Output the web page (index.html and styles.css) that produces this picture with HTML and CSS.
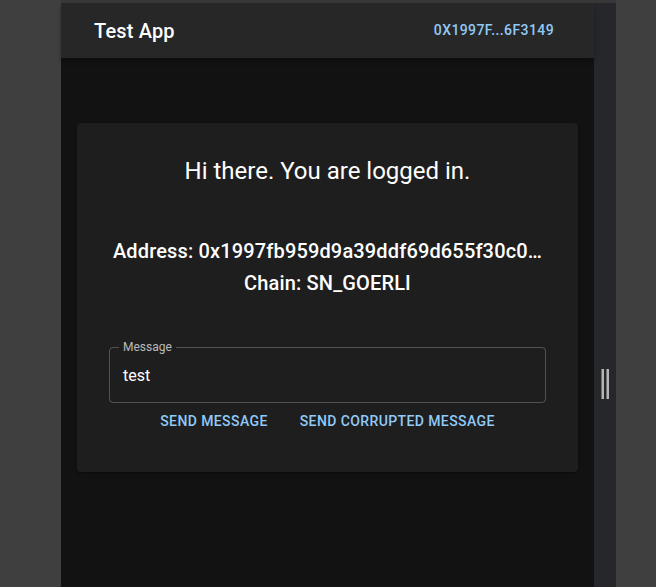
FILE: index.html
```html
<!DOCTYPE html>
<html>
<head>
<meta charset="utf-8">
<link rel="stylesheet" href="styles.css">
</head>
<body>
<div class="screen">
  <div class="gutter"></div>
  <div class="frame">
    <div class="topband"></div>
    <div class="window">
      <div class="app">
        <header class="appbar">
          <div class="title">Test App</div>
          <button class="account">0X1997F...6F3149</button>
        </header>
        <main class="main">
          <section class="card">
            <h1 class="greeting">Hi there. You are logged in.</h1>
            <div class="info">
              <div class="addr">Address: 0x1997fb959d9a39ddf69d655f30c0…</div>
              <div class="chain">Chain: SN_GOERLI</div>
            </div>
            <fieldset class="field">
              <legend class="label">Message</legend>
              <div class="value">test</div>
            </fieldset>
            <div class="actions">
              <button class="btn">Send message</button>
              <button class="btn">Send corrupted message</button>
            </div>
          </section>
        </main>
      </div>
      <div class="sidestrip">
        <div class="grip"><span></span><span></span></div>
      </div>
    </div>
  </div>
</div>
</body>
</html>
```
FILE: styles.css
```css
html, body {
  margin: 0;
  padding: 0;
  background: #3f3f3f;
  height: 587px;
  overflow: hidden;
  font-family: Roboto, "Liberation Sans", sans-serif;
}
.screen {
  display: flex;
  height: 587px;
}
.gutter {
  width: 61px;
  flex: none;
}
.frame {
  display: flex;
  flex-direction: column;
  width: 555px;
  flex: none;
}
.topband {
  height: 3px;
  background: #373737;
}
.window {
  flex: 1;
  display: flex;
}
.app {
  width: 533px;
  background: #121212;
  display: flex;
  flex-direction: column;
}
.appbar {
  height: 55px;
  flex: none;
  background: #272727;
  display: flex;
  align-items: center;
  justify-content: space-between;
  padding: 0 32px 0 33px;
  box-shadow: 0 2px 4px -1px rgba(0,0,0,0.2), 0 4px 5px 0 rgba(0,0,0,0.14);
  position: relative;
  z-index: 1;
}
.title {
  color: #fff;
  font-size: 20px;
  font-weight: 500;
  letter-spacing: 0.0075em;
  margin-top: 1px;
}
.account {
  background: none;
  border: 0;
  padding: 0 8px;
  font-family: inherit;
  color: #90caf9;
  font-size: 14px;
  font-weight: 500;
  letter-spacing: 0.02857em;
  margin-top: -2px;
}
.main {
  flex: 1;
  padding: 65px 16px 0;
}
.card {
  background: #1e1e1e;
  border-radius: 4px;
  box-shadow: 0 2px 1px -1px rgba(0,0,0,0.2), 0 1px 1px 0 rgba(0,0,0,0.14), 0 1px 3px 0 rgba(0,0,0,0.12);
  padding: 34px 32px 0 32px;
  height: 349px;
  box-sizing: border-box;
  display: flex;
  flex-direction: column;
  align-items: center;
}
.card > * {
  flex: none;
}
.greeting {
  margin: 0;
  color: #fff;
  font-size: 24px;
  font-weight: 400;
  line-height: 28px;
}
.info {
  margin-top: 50px;
  color: #fff;
  font-size: 20px;
  font-weight: 500;
  letter-spacing: 0.0075em;
  text-align: center;
  line-height: 32px;
}
.field {
  margin: 42px 0 0;
  align-self: stretch;
  border: 1px solid rgba(255,255,255,0.23);
  border-radius: 4px;
  padding: 0 13px;
  height: 62px;
  box-sizing: border-box;
  min-width: 0;
}
.label {
  color: rgba(255,255,255,0.7);
  font-size: 12px;
  padding: 0 4px;
  margin-left: -4px;
  line-height: 12px;
}
.value {
  color: #fff;
  font-size: 16px;
  line-height: 19px;
  margin-top: 13px;
}
.actions {
  margin-top: 0;
  display: flex;
  gap: 16px;
}
.btn {
  background: none;
  border: 0;
  font-family: inherit;
  color: #90caf9;
  font-size: 14px;
  font-weight: 500;
  text-transform: uppercase;
  letter-spacing: 0.02857em;
  padding: 6px 8px;
  line-height: 24px;
}
.sidestrip {
  width: 22px;
  background: #26272b;
  display: flex;
  align-items: flex-start;
  justify-content: center;
  padding-top: 366px;
  box-sizing: border-box;
}
.grip {
  display: flex;
  gap: 2px;
  margin-left: -1px;
}
.grip span {
  width: 3px;
  height: 30px;
  background: #b4b4b4;
  border-left: 1px solid #707070;
  box-sizing: border-box;
}
```
